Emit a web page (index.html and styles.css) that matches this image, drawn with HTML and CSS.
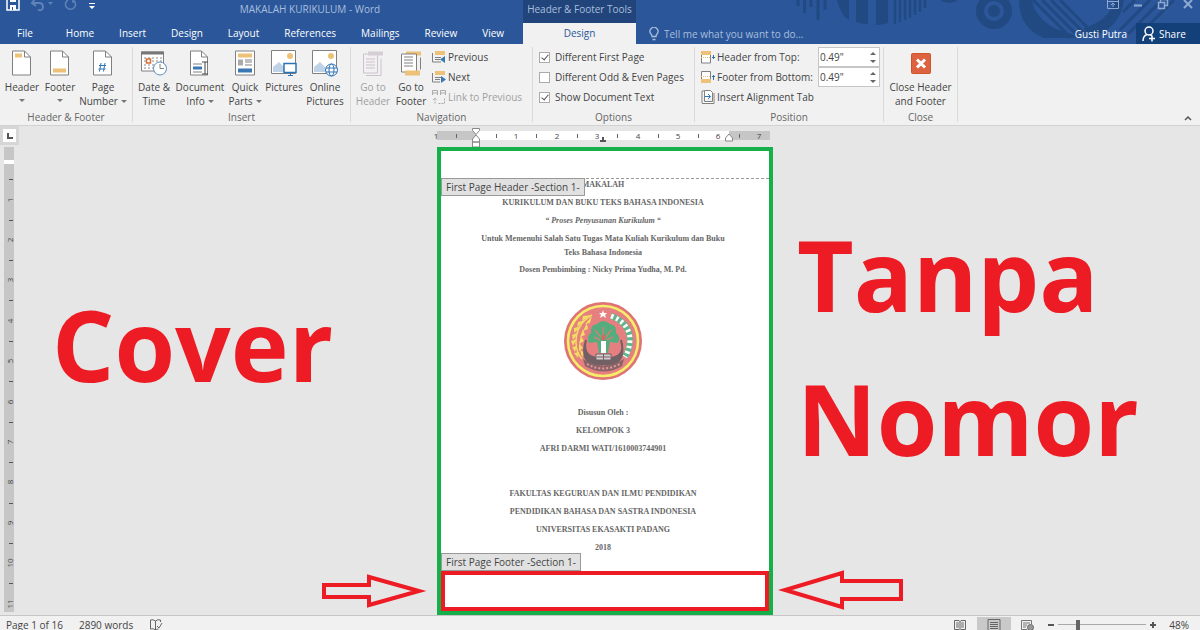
FILE: index.html
```html
<!doctype html>
<html lang="en">
<head>
    <meta charset="utf-8">
    <meta name="viewport" content="width=device-width, initial-scale=1">

    <title>MAKALAH KURIKULUM - Word</title>

    <link rel="stylesheet" href="styles.css">
</head>
<body>
    <header class="topbar">
        <svg class="topbar-art" width="410" height="44" viewBox="0 0 410 44" aria-hidden="true">
            <path d="M8 0v6M14.500 0v13M21 0v7M28 0v20M35 0v10" stroke-width="3"/>
            <path d="M47 0h12v20q-8-4-12-20zM66 0h12v24q-7 0-12-2zM86 0h12v23q-6 2-12 2z" class="fill"/>
            <path d="M105 0v24M110 0v22M115 0v20M120 0v18M125 0v15M130 0v12M135 0v8" stroke-width="2.500"/>
            <path d="M150 0q9 6 18 0z" class="fill"/>
            <circle cx="204" cy="11" r="14" stroke-width="8"/>
            <circle cx="204" cy="11" r="6" class="fill"/>
            <path d="M229 0h13q2 16 22 28l28 10h-38q-25-10-25-38zM298 38q32-8 36-38h-10q-4 20-30 28z" class="fill"/>
            <path d="M243 0l38 38M252 0l36 36M261 0l34 34M270 0l29 29M345 0l-12 12M360 0l-30 30M372 0l-34 34M384 0l-30 30" stroke-width="3"/>
        </svg>

        <div class="titlebar">
            <div class="quick-access">
                <button type="button" aria-label="Save">
                    <svg width="14" height="14" viewBox="0 0 14 14"><path d="M1 1h12v12H1z" fill="none" stroke="#fff" stroke-width="1.500"/><path d="M4 1h6v4H4zM4 8h6v5H4z" fill="#fff"/><path d="M6 10h1v3H6z" fill="#2b579a"/></svg>
                </button>
                <button type="button" aria-label="Undo">
                    <svg width="24" height="14" viewBox="0 0 24 14"><path d="M5 2L2 6l4 3M2 6h7q4 0 4 4t-5 3" fill="none" stroke="#5f82b8" stroke-width="2"/><path d="M18 5h5l-2.500 3z" fill="#5f82b8"/></svg>
                </button>
                <button type="button" aria-label="Repeat">
                    <svg width="14" height="14" viewBox="0 0 14 14"><path d="M9 3a5 5 0 1 1-5 0M9 6V2h4" fill="none" stroke="#5f82b8" stroke-width="1.500"/></svg>
                </button>
                <button type="button" aria-label="Customize Quick Access Toolbar">
                    <svg width="8" height="14" viewBox="0 0 8 14"><path d="M1 6h6v1H1zM1 9h6l-3 3z" fill="#fff"/></svg>
                </button>
            </div>
            <h1 class="doc-title">MAKALAH KURIKULUM - Word</h1>
        </div>
        <div class="context-title">Header &amp; Footer Tools</div>
        <div class="window-buttons">
            <button type="button" aria-label="Ribbon Display Options">
                <svg width="12" height="12" viewBox="0 0 12 12"><path d="M.5 1.500h11v9H.5zM1 3.500h10M6 9V5M4 7l2-2 2 2"/></svg>
            </button>
            <button type="button" aria-label="Minimize">
                <svg width="10" height="12" viewBox="0 0 10 12"><path d="M1 7.500h8" stroke-width="2"/></svg>
            </button>
            <button type="button" aria-label="Restore Down">
                <svg width="12" height="12" viewBox="0 0 12 12"><path d="M3.500 4V1.500h7v6H8M1.500 4.500h6v6h-6z" stroke-width="1.500"/></svg>
            </button>
            <button type="button" aria-label="Close">
                <svg width="10" height="12" viewBox="0 0 10 12"><path d="M1 2l8 8M9 2l-8 8" stroke-width="2"/></svg>
            </button>
        </div>

        <nav class="tabs">
            <a href="#" class="tab tab-file">File</a>
            <a href="#" class="tab">Home</a>
            <a href="#" class="tab">Insert</a>
            <a href="#" class="tab">Design</a>
            <a href="#" class="tab">Layout</a>
            <a href="#" class="tab">References</a>
            <a href="#" class="tab">Mailings</a>
            <a href="#" class="tab">Review</a>
            <a href="#" class="tab">View</a>
        </nav>
        <a href="#" class="tab-active">Design</a>
        <div class="tabs-right">
            <svg width="10" height="14" viewBox="0 0 10 14" aria-hidden="true"><path d="M3 9.500Q3 8 2 7a4 4 0 1 1 6 0Q7 8 7 9.500zM3.500 12.500h3" fill="none" stroke="#a9bedd" stroke-width="1.300"/></svg>
            <input class="tell-me" type="text" aria-label="Tell me" placeholder="Tell me what you want to do...">
            <a href="#" class="user">Gusti Putra</a>
            <button type="button" class="share">
                <svg width="14" height="16" viewBox="0 0 14 16" aria-hidden="true"><circle cx="7" cy="5" r="4"/><path d="M1 15q0-5 4-6.500M8 8.500l2 1.500M7 12.500h6M10 9.500v6"/></svg>
                Share
            </button>
        </div>
    </header>

    <section class="ribbon">
        <div class="group">
            <div class="group-body group-hf">
                <button type="button" class="big">
                    <svg width="20" height="26" viewBox="0 0 20 26"><path d="M.5.5h12l6 6v18H.5z" class="sheet"/><path d="M12.500.5v6h6" class="line"/><path d="M3 3h7v4H3z" class="gold"/></svg>
                    <span>Header</span><span class="caret"></span>
                </button>
                <button type="button" class="big">
                    <svg width="20" height="26" viewBox="0 0 20 26"><path d="M.5.5h12l6 6v18H.5z" class="sheet"/><path d="M12.500.5v6h6" class="line"/><path d="M3 18h13v4H3z" class="gold"/></svg>
                    <span>Footer</span><span class="caret"></span>
                </button>
                <button type="button" class="big">
                    <svg width="20" height="26" viewBox="0 0 20 26"><path d="M.5.5h12l6 6v18H.5z" class="sheet"/><path d="M12.500.5v6h6" class="line"/><path d="M8 12.500L6.500 21M12 12.500L10.500 21M6 15h7M5.500 18.500h7" class="blue-line"/></svg>
                    <span>Page</span><span>Number<i class="caret"></i></span>
                </button>
            </div>
            <h2 class="group-label">Header &amp; Footer</h2>
        </div>

        <div class="group">
            <div class="group-body group-insert">
                <button type="button" class="big">
                    <svg width="26" height="26" viewBox="0 0 26 26"><path d="M.5 1.500h22v19H.5z" class="sheet"/><path d="M0 1h23v3H0z" fill="#777"/><path d="M3 7.500h18M3 10.500h18M3 14.500h18M3 17.500h18" stroke="#888" stroke-dasharray="2 2"/><path d="M5.500 8.500h4v4h-4z" fill="#fff" stroke="#d96f3a" stroke-width="1.500"/><circle cx="19" cy="18" r="6.500" fill="#fff" stroke="#5b8bc0"/><path d="M19 13.500V18h4" class="line"/></svg>
                    <span>Date &amp;</span><span>Time</span>
                </button>
                <button type="button" class="big">
                    <svg width="20" height="26" viewBox="0 0 20 26"><path d="M.5.5h11l6 6v18H.5z" class="sheet"/><path d="M11.500.5v6h6M3 13.500h9M3 21.500h9" class="line"/><path d="M3 16h9v3H3z" class="blue"/><path d="M12 11.500h6M15 11.500v12M12 23.500h6" stroke="#444"/></svg>
                    <span>Document</span><span>Info<i class="caret"></i></span>
                </button>
                <button type="button" class="big">
                    <svg width="20" height="26" viewBox="0 0 20 26"><path d="M.5.5h19v24H.5z" class="sheet"/><path d="M3 3h14v4H3z" class="gold"/><path d="M3 9h5v6H3z" fill="#aaa"/><path d="M10 9.500h7M10 11.500h7M10 14.500h7" class="line"/><path d="M3 18h14v4H3z" class="blue"/></svg>
                    <span>Quick</span><span>Parts<i class="caret"></i></span>
                </button>
                <button type="button" class="big">
                    <svg width="26" height="27" viewBox="0 0 26 27"><path d="M.5.5h24v23H.5z" class="sheet"/><circle cx="19" cy="6" r="3" class="gold"/><path d="M2 22v-5l6-5 5 5v5z" fill="#c0d2e8"/><path d="M13 13.500h12v9H13z" fill="#fff" stroke="#2e74b5" stroke-width="1.500"/><path d="M17 25.500h5M19.500 23v3" class="blue-line"/></svg>
                    <span>Pictures</span>
                </button>
                <button type="button" class="big">
                    <svg width="26" height="27" viewBox="0 0 26 27"><path d="M.5.5h24v23H.5z" class="sheet"/><circle cx="19" cy="6" r="3" class="gold"/><path d="M2 22v-5l6-5 5 5v5z" fill="#c0d2e8"/><circle cx="19.500" cy="20" r="6" fill="#fff" stroke="#2e74b5"/><ellipse cx="19.500" cy="20" rx="2.500" ry="6" class="blue-line"/><path d="M14 18h11M14 22h11" stroke="#2e74b5"/></svg>
                    <span>Online</span><span>Pictures</span>
                </button>
            </div>
            <h2 class="group-label">Insert</h2>
        </div>

        <div class="group">
            <div class="group-body group-nav">
                <button type="button" class="big" disabled>
                    <svg width="20" height="26" viewBox="0 0 20 26"><path d="M.5 3.500h14v19H.5zM3 25h15V8" fill="#f3eff3" stroke="#c9c4c9"/><path d="M5 1h15v4H5z" fill="#d5ced5"/><path d="M3 8.500h9M3 11.500h9M3 14.500h9M3 17.500h9" stroke="#c9c4c9"/></svg>
                    <span>Go to</span><span>Header</span>
                </button>
                <button type="button" class="big">
                    <svg width="20" height="26" viewBox="0 0 20 26"><path d="M5 1h15v4H5z" class="gold"/><path d="M.5 3.500h15v18H.5z" class="sheet"/><path d="M3 6.500h9M3 9.500h9M3 12.500h9M3 15.500h9M19.500 7v12" class="line"/><path d="M4 20h15v5H4z" class="gold"/></svg>
                    <span>Go to</span><span>Footer</span>
                </button>
                <ul class="small-list">
                    <li><button type="button" class="small">
                        <svg width="14" height="14" viewBox="0 0 14 14"><path d="M.5 3v9H9" class="line"/><path d="M3 1h10v4H3z" class="gold"/><path d="M3 7.500h6M3 9.500h5" class="line"/><path d="M13 6v7l-5-3.500z" class="blue"/></svg>
                        Previous</button></li>
                    <li><button type="button" class="small">
                        <svg width="14" height="14" viewBox="0 0 14 14"><path d="M.5 3v9H8" class="line"/><path d="M3 1h10v4H3z" class="gold"/><path d="M3 7.500h6M3 9.500h5" class="line"/><path d="M9 6v7l5-3.500z" class="blue"/></svg>
                        Next</button></li>
                    <li><button type="button" class="small" disabled>
                        <svg width="14" height="14" viewBox="0 0 14 14"><path d="M.5 5V.5h5V5M8.500 5V.5h5V5M.5 3h5M8.500 3h5" fill="none" stroke="#aaa"/><path d="M3 13.500V8M1 10l2-2 2 2M6.500 13.500h6V8" fill="none" stroke="#aaa" stroke-dasharray="2 1"/></svg>
                        Link to Previous</button></li>
                </ul>
            </div>
            <h2 class="group-label">Navigation</h2>
        </div>

        <div class="group">
            <div class="group-body group-options">
                <ul class="small-list">
                    <li><label class="check"><input type="checkbox" checked> Different First Page</label></li>
                    <li><label class="check"><input type="checkbox"> Different Odd &amp; Even Pages</label></li>
                    <li><label class="check"><input type="checkbox" checked> Show Document Text</label></li>
                </ul>
            </div>
            <h2 class="group-label">Options</h2>
        </div>

        <div class="group">
            <div class="group-body group-position">
                <ul class="small-list">
                    <li class="measure">
                        <svg width="14" height="14" viewBox="0 0 14 14"><path d="M.5 1v12h9V1" class="sheet"/><path d="M0 1h10v4H0z" class="gold"/><path d="M0 7.500h10" stroke="#e9b96e" stroke-dasharray="1 1"/><path d="M12.500 5v4M11 7.500h3" class="blue-line"/></svg>
                        <label for="from-top">Header from Top:</label>
                        <span class="spinner"><input id="from-top" type="text" value="0.49&quot;"><i class="up"></i><i class="down"></i></span>
                    </li>
                    <li class="measure">
                        <svg width="14" height="14" viewBox="0 0 14 14"><path d="M.5 13V1.500h9V13" class="sheet"/><path d="M0 9h10v4H0z" class="gold"/><path d="M0 6.500h10" stroke="#e9b96e" stroke-dasharray="1 1"/><path d="M12.500 5v5M11 6.500h3" class="blue-line"/></svg>
                        <label for="from-bottom">Footer from Bottom:</label>
                        <span class="spinner"><input id="from-bottom" type="text" value="0.49&quot;"><i class="up"></i><i class="down"></i></span>
                    </li>
                    <li><button type="button" class="small">
                        <svg width="14" height="14" viewBox="0 0 14 14"><path d="M1 13V1h2M3.500.5h6l2 2v9h-8zM1 13.500h12V3" class="sheet"/><path d="M4 6.500h5M7 4l2.500 2.500L7 9" class="blue-line"/></svg>
                        Insert Alignment Tab</button></li>
                </ul>
            </div>
            <h2 class="group-label">Position</h2>
        </div>

        <div class="group">
            <div class="group-body group-close">
                <button type="button" class="big">
                    <svg width="22" height="27" viewBox="0 0 22 27"><rect x="1.500" y="3.500" width="19" height="20" rx="1" fill="#dc6240" stroke="#cf5427"/><path d="M7 9.500l8 8M15 9.500l-8 8" stroke="#fff" stroke-width="3"/></svg>
                    <span>Close Header</span><span>and Footer</span>
                </button>
            </div>
            <h2 class="group-label">Close</h2>
        </div>

        <button type="button" class="collapse" aria-label="Collapse the Ribbon">
            <svg width="8" height="6" viewBox="0 0 8 6"><path d="M1 5l3-3 3 3" fill="none" stroke="#555" stroke-width="1.500"/></svg>
        </button>
    </section>

    <main class="workspace">
        <button type="button" class="tab-stop" aria-label="Left Tab">
            <svg width="13" height="13" viewBox="0 0 13 13"><path d="M5 4v5h5" fill="none" stroke="#555" stroke-width="2"/></svg>
        </button>

        <svg class="ruler-h" width="336" height="22" viewBox="0 0 336 22" aria-hidden="true">
            <path d="M0 5h333v9H0z" fill="#c6c6c6"/>
            <path d="M39 5h253v9H39z" fill="#fff"/>
            <path d="M19.500 8v4M59.500 8v4M99.500 8v4M140.500 8v4M180.500 8v4M221.500 8v4M261.500 8v4M302.500 8v4" stroke="#666"/>
            <g>
                <text x="-1" y="13">1</text><text x="79" y="13">1</text><text x="120" y="13">2</text>
                <text x="160" y="13">3</text><text x="201" y="13">4</text><text x="241" y="13">5</text>
                <text x="281" y="13">6</text><text x="322" y="13">7</text>
            </g>
            <path d="M35.500 2.500h7v2l-3.500 4-3.500-4zM35.500 16v-3l3.500-4 3.500 4v3zM35.500 16h7v5h-7zM288.500 15v-3l3.500-4 3.500 4v3z" fill="#fff" stroke="#888"/>
            <path d="M163 15h6M166 11v4" stroke="#555" stroke-width="2"/>
        </svg>

        <svg class="ruler-v" width="18" height="468" viewBox="0 0 18 468" aria-hidden="true">
            <path d="M4 0h10v465H4z" fill="#c6c6c6"/>
            <path d="M4 13h10v4H4z" fill="#fff"/>
            <path d="M9 32.500h4M9 73.500h4M9 113.500h4M9 153.500h4M9 194.500h4M9 234.500h4M9 275.500h4M9 315.500h4M9 356.500h4M9 396.500h4M9 436.500h4" stroke="#555"/>
            <g transform="rotate(-90)">
                <text x="-53" y="13">1</text><text x="-93" y="13">2</text><text x="-133" y="13">3</text>
                <text x="-174" y="13">4</text><text x="-214" y="13">5</text><text x="-255" y="13">6</text>
                <text x="-295" y="13">7</text><text x="-335" y="13">8</text><text x="-376" y="13">9</text>
                <text x="-416" y="13">10</text><text x="-457" y="13">11</text>
            </g>
        </svg>

        <div class="note note-left">
            <p>Cover</p>
            <svg width="108" height="36" viewBox="0 0 108 36" aria-hidden="true"><path d="M3 12h45V4l50 14-50 14v-8H3z"/></svg>
        </div>

        <article class="page">
            <div class="page-header"><span class="tag tag-header">First Page Header -Section 1-</span></div>
            <div class="page-body">
                <p>MAKALAH</p>
                <p>KURIKULUM DAN BUKU TEKS BAHASA INDONESIA</p>
                <p><em>“ Proses Penyusunan Kurikulum “</em></p>
                <p class="tight">Untuk Memenuhi Salah Satu Tugas Mata Kuliah Kurikulum dan Buku<br>Teks Bahasa Indonesia</p>
                <p>Dosen Pembimbing : Nicky Prima Yudha, M. Pd.</p>

                <svg class="emblem" width="78" height="78" viewBox="0 0 78 78" role="img" aria-label="University emblem">
                    <circle cx="39" cy="39" r="38" fill="#e57b7b" stroke="#df7272" stroke-width="2"/>
                    <circle cx="39" cy="39" r="35" fill="#e57f80" stroke="#f5ee69" stroke-width="2.500"/>
                    <path d="M28 13Q12 22 12 40q0 10 6 17" fill="none" stroke="#f3dc62" stroke-width="1.500"/>
                    <path d="M27 13l-8 1-1 5zM22 18l-8 2-1 5zM18 24l-8 2 0 5zM15 30l-7 3 1 5zM13 37l-6 2 2 5zM13 44l-5 1 3 5zM15 50l-5 1 4 5zM28 14l-2 7-5 1zM23 21l1 6-5 2zM19 27l2 6-5 2zM17 34l3 5-5 3zM15 41l4 5-4 3zM16 48l5 3-3 4z" fill="#f3dc62"/>
                    <path d="M47 14Q64 20 66 36q0 11-5 19" fill="none" stroke="#60b58a" stroke-width="6"/>
                    <path d="M47 14Q64 20 66 36q0 11-5 19" fill="none" stroke="#fff" stroke-width="5" stroke-dasharray="2.500 3"/>
                    <path d="M39 8l1 3h3l-2 2 1 3-3-2-3 2 1-3-2-2h3z" fill="#fff"/>
                    <path d="M22 38q-6 20 7 24h20q13-4 8-24 5 16-10 18H33Q18 54 22 38z" fill="#716064" stroke="#716064" stroke-width="2"/>
                    <path d="M25 41q-3-7 2-10-1-8 6-9 6-6 13 0 7 1 6 9 5 4 2 10l-8-1-2 11h-9l-2-11z" fill="#55ad7d"/>
                    <path d="M30 35l6 3M31 28l6 7M39 25v8M47 28l-5 7M49 35l-6 3" stroke="#c9837a" stroke-width="1.500"/>
                    <path d="M37 39h5v12h-5z" fill="#fff"/>
                    <path d="M39.500 32q4 4 0 7-4-3 0-7z" fill="#e06464"/>
                    <path d="M32 52h15v6H32z" fill="#d6cdd0" stroke="#716064"/>
                    <path d="M33 55h13M39.500 52v6" stroke="#716064"/>
                    <path d="M19 57q20 13 41 0l-2 7q-18 11-37 0z" fill="#8b6468"/>
                    <path d="M23 62q16 9 33 0" fill="none" stroke="#e39a9a" stroke-width="2" stroke-dasharray="2 2"/>
                </svg>

                <p>Disusun Oleh :</p>
                <p>KELOMPOK 3</p>
                <p class="authors">AFRI DARMI WATI/1610003744901</p>

                <p>FAKULTAS KEGURUAN DAN ILMU PENDIDIKAN</p>
                <p>PENDIDIKAN BAHASA DAN SASTRA INDONESIA</p>
                <p>UNIVERSITAS EKASAKTI PADANG</p>
                <p>2018</p>
            </div>
            <div class="page-footer"><span class="tag tag-footer">First Page Footer -Section 1-</span></div>
        </article>

        <div class="note note-right">
            <p>Tanpa<br>Nomor</p>
            <svg width="128" height="42" viewBox="0 0 128 42" aria-hidden="true"><path d="M124 12H65V4L8 21l57 17v-8h59z"/></svg>
        </div>
    </main>

    <footer class="statusbar">
        <span>Page 1 of 16</span>
        <span>2890 words</span>
        <button type="button" aria-label="Proofing">
            <svg width="14" height="12" viewBox="0 0 14 12"><path d="M6.500 11V2Q4 0 1.500 1v9q3-1 5 1 1-1 3-1M6.500 2q2-2 5-1v2M8 7l2 2 3-5" fill="none" stroke="#666"/></svg>
        </button>
        <div class="views">
            <button type="button" aria-label="Read Mode">
                <svg width="12" height="12" viewBox="0 0 12 12"><path d="M6 2v10M.5 1.500H5l1 1 1-1h4.500v9H7l-1 1-1-1H.5zM2 4h3M2 6h3M2 8h3M7 4h3M7 6h3M7 8h3" fill="none" stroke="#666"/></svg>
            </button>
            <button type="button" class="current" aria-label="Print Layout">
                <svg width="14" height="12" viewBox="0 0 14 12"><path d="M1 .5h12v11H1zM3 3.500h8M3 5.500h8M3 7.500h8M3 9.500h8" fill="none" stroke="#666"/></svg>
            </button>
            <button type="button" aria-label="Web Layout">
                <svg width="14" height="12" viewBox="0 0 14 12"><path d="M6 10.500H.5v-9h10V5M2 4h7M2 6h4M2 8h3" fill="none" stroke="#777"/><circle cx="9.500" cy="8.500" r="3" fill="#999" stroke="#666"/></svg>
            </button>
        </div>
        <button type="button" class="zoom-step" aria-label="Zoom Out"><svg width="8" height="8" viewBox="0 0 8 8"><path d="M1 4h6"/></svg></button>
        <input class="zoom" type="range" min="10" max="200" value="50" aria-label="Zoom">
        <button type="button" class="zoom-step" aria-label="Zoom In"><svg width="8" height="8" viewBox="0 0 8 8"><path d="M1 4h6M4 1v6"/></svg></button>
        <span class="zoom-value">48%</span>
    </footer>
</body>
</html>
```

FILE: styles.css
```css
/*
 * Reset
 */

*,
*::before,
*::after {
    box-sizing: border-box;
    margin: 0;
    padding: 0;
}

body {
    background-color: #e6e6e6;
    color: #444;
    display: flex;
    flex-direction: column;
    font-family: "Open Sans", "Noto Sans", sans-serif;
    font-size: 10px;
    height: 100vh;
    line-height: 14px;
    overflow: hidden;
    white-space: nowrap;
}

button,
input {
    background: none;
    border: 0;
    color: inherit;
    font: inherit;
}

a {
    color: inherit;
    text-decoration: none;
}

ul {
    list-style: none;
}

svg {
    display: block;
    flex: none;
}

/*
 * Title bar and tabs
 */

.topbar {
    background-color: #2b579a;
    color: #fff;
    display: grid;
    flex: none;
    grid-template-columns: 523px 113px 1fr;
    grid-template-rows: 23px 21px;
    position: relative;
}

.topbar > * {
    position: relative;
}

.topbar .topbar-art {
    fill: none;
    position: absolute;
    right: 0;
    stroke: #214a82;
    top: 0;
}

.topbar-art .fill {
    fill: #214a82;
    stroke: none;
}

.titlebar {
    display: flex;
}

.quick-access {
    align-items: flex-end;
    display: flex;
    gap: 10px;
    height: 11px;
    padding-left: 6px;
    width: 97px;
}

.doc-title {
    color: #a9bedd;
    flex: 1;
    font-size: 10px;
    font-weight: 400;
    line-height: 19px;
    text-align: center;
}

.context-title {
    background-color: #21457a;
    color: #a9bedd;
    line-height: 19px;
    text-align: center;
}

.window-buttons {
    align-items: flex-end;
    display: flex;
    gap: 14px;
    height: 10px;
    justify-content: flex-end;
    padding-right: 7px;
}

.window-buttons svg {
    fill: none;
    stroke: #8fa9d0;
}

.tabs {
    display: flex;
    gap: 25px;
    line-height: 20px;
    padding-left: 17px;
}

.tab-file {
    margin-right: 8px;
}

.tab-active {
    background-color: #f1f1f1;
    color: #2b579a;
    line-height: 20px;
    text-align: center;
}

.tabs-right {
    align-items: center;
    display: flex;
    padding-left: 13px;
}

.tell-me {
    flex: 1;
    margin-left: 5px;
}

.tell-me::placeholder {
    color: #a9bedd;
}

.user {
    margin-right: 9px;
}

.share {
    align-items: center;
    background-color: #14407a;
    display: flex;
    gap: 3px;
    height: 21px;
    padding-left: 6px;
    width: 64px;
}

.share svg {
    fill: none;
    stroke: #fff;
    stroke-width: 1.5;
}

/*
 * Ribbon
 */

.ribbon {
    background-color: #f1f1f1;
    border-bottom: 1px solid #d2d2d2;
    display: flex;
    flex: none;
    height: 82px;
    padding-top: 3px;
}

.group {
    border-right: 1px solid #dadada;
    display: flex;
    flex-direction: column;
    height: 75px;
}

.group-body {
    display: grid;
    flex: 1;
}

.group-label {
    color: #666;
    font-size: 10px;
    font-weight: 400;
    line-height: 10px;
    text-align: center;
}

.group-hf {
    grid-template-columns: 38px 38px 48px;
    padding: 0 5px 0 3px;
}

.group-insert {
    grid-template-columns: 42px 50px 40px 38px 44px;
    padding-right: 3px;
}

.group-nav {
    grid-template-columns: 44px 32px 105px;
}

.group-nav .small-list {
    padding-left: 5px;
}

.group-options,
.group-position {
    padding: 0 3px 0 6px;
}

.group-options {
    width: 161px;
}

.group-position {
    width: 188px;
}

.group-close {
    width: 73px;
}

.big {
    align-items: center;
    display: flex;
    flex-direction: column;
}

.big svg {
    height: 27px;
    margin: 3px 0;
}

.big:disabled,
.small:disabled {
    color: #a0a0a0;
}

.caret {
    border: 3px solid transparent;
    border-bottom: 0;
    border-top-color: #777;
    display: inline-block;
    margin-left: 3px;
    vertical-align: 2px;
}

span.caret {
    margin: 5px 0 0;
}

.small-list li {
    height: 20px;
}

.small,
.check,
.measure {
    align-items: center;
    display: flex;
    gap: 2px;
    height: 20px;
}

.check {
    gap: 5px;
}

.check input {
    appearance: none;
    background-color: #fff;
    border: 1px solid #ababab;
    height: 11px;
    width: 11px;
}

.check input:checked::before {
    border: solid #555;
    border-width: 0 1px 1px 0;
    content: "";
    display: block;
    height: 7px;
    margin: 0 0 0 3px;
    transform: rotate(40deg);
    width: 4px;
}

.spinner {
    background-color: #fff;
    border: 1px solid #c6c6c6;
    display: block;
    height: 20px;
    margin-left: auto;
    position: relative;
    width: 62px;
}

.spinner input {
    display: block;
    height: 18px;
    padding-left: 1px;
    width: 44px;
}

.spinner i {
    border: 3px solid transparent;
    position: absolute;
    right: 3px;
}

.spinner .up {
    border-bottom-color: #666;
    border-top: 0;
    top: 4px;
}

.spinner .down {
    border-bottom: 0;
    border-top-color: #666;
    bottom: 3px;
}

.collapse {
    align-self: flex-end;
    margin: 0 8px 4px auto;
}

.sheet {
    fill: #fff;
    stroke: #808080;
}

.line {
    fill: none;
    stroke: #808080;
}

.gold {
    fill: #edc177;
}

.blue {
    fill: #3a77b5;
}

.blue-line {
    fill: none;
    stroke: #2e74b5;
}

/*
 * Document area
 */

.workspace {
    display: grid;
    flex: 1;
    grid-template-columns: 18px 1fr 336px 1fr;
    grid-template-rows: 21px 1fr;
    min-height: 0;
    padding-right: 8px;
}

.tab-stop {
    background-color: #fff;
    border: 3px solid #d6d6d6;
    height: 19px;
    width: 19px;
}

.ruler-h {
    grid-column: 3;
    overflow: visible;
}

.ruler-v {
    grid-column: 1;
    grid-row: 2;
}

.workspace text {
    fill: #444;
    font-size: 8px;
    text-anchor: middle;
}

.note {
    color: #ed1c24;
    display: flex;
    flex-direction: column;
    font-size: 98px;
    font-weight: 700;
    grid-row: 2;
    justify-content: space-between;
    line-height: 144px;
}

.note svg {
    fill: none;
    stroke: #ed1c24;
    stroke-width: 4;
}

.note-left {
    padding: 125px 8px 6px 34px;
}

.note-left svg {
    align-self: flex-end;
}

.note-right {
    padding: 55px 0 4px 4px;
}

.note-right p {
    padding-left: 20px;
}

.page {
    background-color: #fff;
    border: 4px solid #16b04a;
    color: #666;
    display: flex;
    flex-direction: column;
    font-family: "Liberation Serif", serif;
    font-size: 8px;
    font-weight: 700;
    grid-column: 3;
    grid-row: 2;
    line-height: 18px;
    text-align: center;
}

.page-header {
    border-bottom: 1px dashed #999;
    height: 28px;
    position: relative;
}

.page-body {
    flex: 1;
    padding: 0 4px 0 0;
}

.page-body p {
    margin-top: -3px;
    padding-bottom: 3px;
}

.page-body .tight {
    line-height: 14px;
    margin: -1px 0 1px;
}

.page-body .emblem {
    margin: 20px auto 27px;
}

.page-body .authors {
    margin-bottom: 27px;
}

.page-footer {
    border: 4px solid #ed1c24;
    height: 40px;
    position: relative;
}

.tag {
    background-color: #e1e1e1;
    border: 1px solid #999;
    color: #444;
    font-family: "Open Sans", "Noto Sans", sans-serif;
    font-size: 10px;
    font-weight: 400;
    left: 0;
    line-height: 16px;
    padding: 0 4px;
    position: absolute;
}

.tag-header {
    top: 27px;
}

.tag-footer {
    bottom: 36px;
    left: -4px;
}

/*
 * Status bar
 */

.statusbar {
    align-items: center;
    background-color: #f1f1f1;
    border-top: 1px solid #c6c6c6;
    display: flex;
    flex: none;
    height: 15px;
    padding: 3px 11px 0 6px;
}

.statusbar > span {
    margin-right: 16px;
}

.views {
    display: flex;
    margin: 0 2px 0 auto;
}

.views button {
    display: flex;
    height: 15px;
    justify-content: center;
    padding-top: 2px;
    width: 34px;
}

.views .current {
    background-color: #c9c9c9;
}

.zoom-step svg {
    stroke: #555;
    stroke-width: 2;
}

.zoom {
    appearance: none;
    background: linear-gradient(#aaa, #aaa) center / 100% 1px no-repeat;
    height: 11px;
    margin: 0 3px;
    width: 88px;
}

.zoom::-webkit-slider-thumb {
    appearance: none;
    background-color: #666;
    height: 10px;
    width: 4px;
}

.statusbar .zoom-value {
    margin: 0 0 0 12px;
}
```
